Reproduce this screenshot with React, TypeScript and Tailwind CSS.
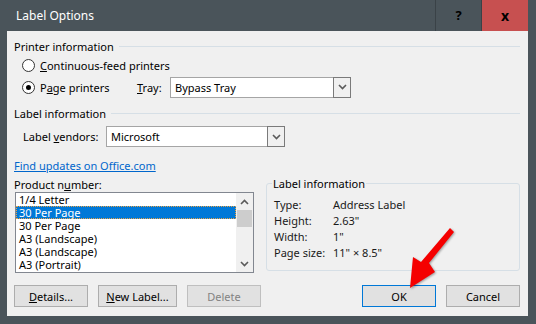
import React from "react"

const font = { fontFamily: '"Noto Sans", "Open Sans", sans-serif' }

const Chevron = ({ up = false }: { up?: boolean }) => (
    <svg width="9" height="6" viewBox="0 0 9 6" className="block">
        <path d={up ? "M1 5 4.5 1.5 8 5" : "M1 1 4.5 4.5 8 1"} fill="none" stroke="#5a5a5a" strokeWidth="1.6" />
    </svg>
)

const Combo = ({ value, className }: { value: string; className: string }) => (
    <div className={"flex h-[21px] items-stretch border border-[#a5a5a5] bg-white " + className}>
        <div className="flex flex-1 items-center pl-[4px] text-black">{value}</div>
        <div className="-m-px flex w-[18px] items-center justify-center border border-[#7a7a7a] bg-[#f0f0f0]">
            <Chevron />
        </div>
    </div>
)

const Radio = ({ checked }: { checked?: boolean }) => (
    <div className="flex size-[13px] items-center justify-center rounded-full border border-[#333] bg-white">
        {checked && <div className="size-[5px] rounded-full bg-black" />}
    </div>
)

const SectionHead = ({ title, className = "" }: { title: string; className?: string }) => (
    <div className={"flex h-[16px] items-center pl-[7px] " + className}>
        <span className="text-black">{title}</span>
        <div className="ml-[5px] h-px flex-1 bg-[#d6dfe6]" />
    </div>
)

const Btn = ({ children, className = "", disabled = false }: { children: React.ReactNode; className?: string; disabled?: boolean }) => (
    <div
        className={
            "flex h-[22px] items-center justify-center border bg-[#e1e1e1] " +
            (disabled ? "border-[#bfbfbf] text-[#838383] " : "border-[#adadad] text-black ") +
            className
        }
    >
        {children}
    </div>
)

const items = ["1/4 Letter", "30 Per Page", "30 Per Page", "A3 (Landscape)", "A3 (Landscape)", "A3 (Portrait)"]

export default function App() {
    return (
        <div className="relative flex h-[324px] w-[536px] flex-col bg-[#4a545a] text-[11px] leading-[13px]" style={font}>
            {/* title bar */}
            <div className="flex h-[31px] items-stretch pr-[8px]">
                <div className="flex flex-1 items-center pl-[16px] text-[12px] text-white">Label Options</div>
                <div className="flex w-[47px] items-center justify-center border-x border-[#3a4247] text-[13px] font-bold text-black">?</div>
                <div className="flex w-[46px] items-center justify-center bg-[#c75050] text-[14px] font-bold text-black">x</div>
            </div>

            {/* client area */}
            <div className="ml-[7px] mr-[8px] flex h-[285px] flex-col bg-[#f0f0f0] pr-[8px]">
                <SectionHead title="Printer information" className="mt-[7px]" />
                <div className="flex h-[22px] items-center pl-[15px]">
                    <Radio />
                    <span className="ml-[5px]"><span className="underline">C</span>ontinuous-feed printers</span>
                </div>
                <div className="flex h-[22px] items-center pl-[15px]">
                    <Radio checked />
                    <span className="ml-[5px] w-[97px]">P<span className="underline">a</span>ge printers</span>
                    <span className="w-[33px]"><span className="underline">T</span>ray:</span>
                    <Combo value="Bypass Tray" className="w-[181px]" />
                </div>

                <SectionHead title="Label information" className="mt-[7px]" />
                <div className="mt-[5px] flex h-[21px] items-center pl-[16px]">
                    <span className="w-[83px]">Label <span className="underline">v</span>endors:</span>
                    <Combo value="Microsoft" className="w-[179px]" />
                </div>

                <div className="mt-[10px] flex h-[16px] items-center pl-[7px]">
                    <span className="text-[#0066cc] underline">Find updates on Office.com</span>
                </div>

                <div className="mt-[3px] flex">
                    <div className="flex flex-col pl-[7px]">
                        <div className="flex h-[16px] items-center">Product n<span className="underline">u</span>mber:</div>
                        <div className="ml-px flex h-[81px] w-[239px] border border-[#828790] bg-white">
                            <div className="flex flex-1 flex-col">
                                {items.map((it, i) => (
                                    <div
                                        key={i}
                                        className={
                                            "flex h-[13px] items-center pl-[3px] leading-[11px] " +
                                            (i === 1 ? "bg-[#0078d7] text-white outline-1 -outline-offset-1 outline-dotted outline-[#e9a245]" : "text-black")
                                        }
                                    >
                                        {it}
                                    </div>
                                ))}
                            </div>
                            <div className="flex w-[17px] flex-col bg-[#f0f0f0]">
                                <div className="flex h-[17px] items-center justify-center"><Chevron up /></div>
                                <div className="mx-px h-[17px] bg-[#cdcdcd]" />
                                <div className="flex-1" />
                                <div className="flex h-[17px] items-center justify-center"><Chevron /></div>
                            </div>
                        </div>
                    </div>

                    <fieldset className="ml-[12px] mt-[1px] h-[94px] w-[254px] rounded-[3px] border border-[#d6dfe6] px-[7px]">
                        <legend className="ml-[-2px] px-[1px] text-black">Label information</legend>
                        <div className="mt-[6px] grid auto-rows-[16px] grid-cols-[59px_1fr] items-center text-[#1a1a1a]">
                            <span>Type:</span><span>Address Label</span>
                            <span>Height:</span><span>2.63"</span>
                            <span>Width:</span><span>1"</span>
                            <span>Page size:</span><span>11" × 8.5"</span>
                        </div>
                    </fieldset>
                </div>

                <div className="mt-[12px] flex pl-[7px]">
                    <Btn className="w-[74px]"><span className="underline">D</span>etails...</Btn>
                    <Btn className="ml-[10px] w-[79px]"><span className="underline">N</span>ew Label...</Btn>
                    <Btn className="ml-[10px] w-[74px]" disabled>Delete</Btn>
                    <div className="flex-1" />
                    <Btn className="w-[74px] !border-[#0078d7]">OK</Btn>
                    <Btn className="ml-[10px] w-[74px]">Cancel</Btn>
                </div>
            </div>

            {/* red callout arrow */}
            <svg className="pointer-events-none absolute left-0 top-0" width="536" height="324">
                <polygon
                    points="450,228 454,232 429,263 435,272 410,288 413,257 421,262"
                    fill="#f50000"
                    style={{ filter: "drop-shadow(1px 1px 1px rgba(0,0,0,0.35))" }}
                />
            </svg>
        </div>
    )
}
